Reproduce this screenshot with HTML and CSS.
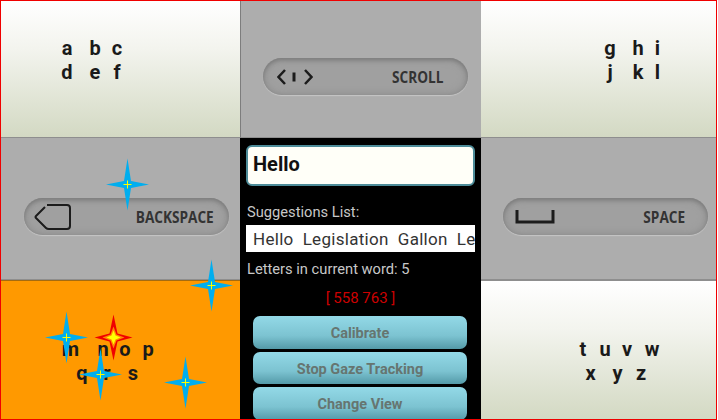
FILE: index.html
```html
<!DOCTYPE html>
<html lang="en">
<head>
    <meta charset="UTF-8">
    <title>Gaze Keyboard</title>
    <link rel="stylesheet" href="styles.css">
</head>
<body>
  <div class="screen">
    <div class="key letter-key letters-abc">
      <div class="letters">
        <div class="letter-row"><span>a</span><span>b</span><span>c</span></div>
        <div class="letter-row"><span>d</span><span>e</span><span>f</span></div>
      </div>
    </div>

    <div class="key tool-key tool-scroll">
      <div class="pill">
        <svg class="pill-icon" width="36" height="18" viewBox="0 0 36 18">
          <path d="M8 2 L1.5 9 L8 16 M28 2 L34.5 9 L28 16" />
          <path class="scroll-bar" d="M17 4.500 V13.500" />
        </svg>
        <span class="pill-label">SCROLL</span>
      </div>
    </div>

    <div class="key letter-key letters-ghi">
      <div class="letters">
        <div class="letter-row"><span>g</span><span>h</span><span>i</span></div>
        <div class="letter-row"><span>j</span><span>k</span><span>l</span></div>
      </div>
    </div>

    <div class="key tool-key tool-backspace">
      <div class="pill">
        <svg class="pill-icon" width="38" height="28" viewBox="0 0 38 28">
          <path d="M13 2 H33 Q36 2 36 5 V23 Q36 26 33 26 H15 Q13 26 12 25 L2 15 Q1 14 2 13 L11 4" />
        </svg>
        <span class="pill-label">BACKSPACE</span>
      </div>
    </div>

    <div class="panel">
      <div class="word-box">Hello</div>
      <div class="panel-text">Suggestions List:</div>
      <div class="suggestions">Hello  Legislation  Gallon  Le</div>
      <div class="panel-text letters-count">Letters in current word: 5</div>
      <div class="coords">[ 558 763 ]</div>
      <div class="btn">Calibrate</div>
      <div class="btn">Stop Gaze Tracking</div>
      <div class="btn">Change View</div>
    </div>

    <div class="key tool-key tool-space">
      <div class="pill">
        <svg class="pill-icon" width="40" height="16" viewBox="0 0 40 16">
          <path d="M2 1 V13 H38 V1" />
        </svg>
        <span class="pill-label">SPACE</span>
      </div>
    </div>

    <div class="key letters-mnop">
      <div class="letters">
        <div class="letter-row"><span>m</span><span>n</span><span>o</span><span>p</span></div>
        <div class="letter-row"><span>q</span><span>r</span><span>s</span></div>
      </div>
    </div>

    <div class="key letter-key letters-tuvw">
      <div class="letters">
        <div class="letter-row"><span>t</span><span>u</span><span>v</span><span>w</span></div>
        <div class="letter-row"><span>x</span><span>y</span><span>z</span></div>
      </div>
    </div>

    <!-- gaze points, drawn over the keys -->
    <svg class="star star-1" width="44" height="54" viewBox="-22.5 -27.5 44 54"><use href="#gaze-star" /></svg>
    <svg class="star star-2" width="44" height="54" viewBox="-22.5 -27.5 44 54"><use href="#gaze-star" /></svg>
    <svg class="star star-3" width="44" height="54" viewBox="-22.5 -27.5 44 54"><use href="#gaze-star" /></svg>
    <svg class="star star-4" width="44" height="54" viewBox="-22.5 -27.5 44 54"><use href="#gaze-star" /></svg>
    <svg class="star star-5" width="44" height="54" viewBox="-22.5 -27.5 44 54"><use href="#gaze-star" /></svg>
    <svg class="star star-now" width="44" height="54" viewBox="-22.5 -27.5 44 54">
      <polygon class="star-red" points="0,-23 4,-4 19,0 4,4 0,23 -4,4 -19,0 -4,-4" />
      <polygon class="star-glow" points="0,-11 3,-3 11,0 3,3 0,11 -3,3 -11,0 -3,-3" />
      <polygon class="star-mid" points="0,-7 2,-2 7,0 2,2 0,7 -2,2 -7,0 -2,-2" />
    </svg>
  </div>

  <svg width="0" height="0" class="defs">
    <defs>
      <g id="gaze-star">
        <polygon class="star-blue" points="0,-26 3.500,-3.500 21.500,0 3.500,3.500 0,26 -3.500,3.500 -21.500,0 -3.500,-3.500" />
        <path class="star-cross" d="M0 -4 V4 M-4 0 H4" />
      </g>
    </defs>
  </svg>
</body>
</html>
```
FILE: styles.css
```css
* {
    box-sizing: border-box;
    margin: 0;
    padding: 0;
}

body {
    width: 718px;
    height: 420px;
    overflow: hidden;
    background: white;
    font-family: Roboto, 'Liberation Sans', sans-serif;
}

.screen {
    position: relative;
    width: 717px;
    height: 420px;
    border: 1px solid #f00000;
    overflow: hidden;
    display: grid;
    grid-template-columns: 239px 241px 235px;
    grid-template-rows: 137px 142px 139px;
}

.key {
    display: flex;
}

.letter-key {
    background: linear-gradient(#ffffff, #f3f4ee 35%, #d3d9c3);
    border-bottom: 1px solid #8e8e8e;
}

.letters-tuvw {
    border-bottom: none;
    border-top: 1px solid #8e8e8e;
}

.letters {
    font-size: 20px;
    font-weight: 700;
    line-height: 24px;
    color: #1a1a1a;
}

.letter-row {
    display: grid;
    text-align: center;
}

/* the letters of the original are not on a regular grid */
.letters-abc .letters {
    margin: 35px 0 0 52px;
}

.letters-abc .letter-row {
    grid-template-columns: 28px 28px 16px;
}

.letters-ghi .letters {
    margin: 35px 0 0 115px;
}

.letters-ghi .letter-row {
    grid-template-columns: 28px 28px 11px;
}

.letters-mnop {
    background: #ff9900;
    border-top: 1px solid #a56b10;
}

.letters-mnop .letters {
    margin: 56px 0 0 53px;
}

.letters-mnop .letter-row:first-child {
    grid-template-columns: 33px 32px 12px 34px;
}

.letters-mnop .letter-row:last-child {
    grid-template-columns: 26px 24px 28px;
    margin-left: 15px;
}

.letters-tuvw .letters {
    margin: 56px 0 0 91px;
}

.letters-tuvw .letter-row:first-child {
    grid-template-columns: 22px 22px 22px 28px;
}

.letters-tuvw .letter-row:last-child {
    grid-template-columns: 27px 27px 20px;
    margin-left: 5px;
}

.tool-key {
    background: #adadad;
    border-bottom: 1px solid #8e8e8e;
    padding-left: 23px;
    padding-top: 60px;
}

.tool-scroll {
    border-left: 1px solid #7d7d7d;
    padding-top: 57px;
    padding-left: 22px;
}

.tool-space {
    padding-left: 22px;
}

.pill {
    width: 205px;
    height: 37px;
    border-radius: 19px;
    background: #a0a0a0;
    box-shadow: inset 0 2px 4px #7a7a7a, inset 0 0 10px #8e8e8e, 0 1px 1px #c6c6c6;
    display: flex;
    align-items: center;
    justify-content: space-between;
    padding: 0 25px 0 14px;
}

.tool-backspace .pill {
    padding: 0 15px 0 10px;
}

.tool-space .pill {
    padding: 0 23px 0 12px;
}

.pill-icon {
    fill: none;
    stroke: #1c1c1c;
    stroke-width: 2;
}

.tool-scroll .pill-icon {
    stroke-width: 2.5;
}

.tool-scroll .scroll-bar {
    stroke-width: 3;
}

.tool-space .pill-icon {
    stroke-width: 3;
}

.pill-label {
    font-family: 'Open Sans', sans-serif;
    font-size: 16px;
    font-weight: 700;
    color: #333333;
    transform: scaleX(0.85);
    transform-origin: right center;
}

.panel {
    grid-column: 2;
    grid-row: 2 / 4;
    background: black;
    padding: 7px 6px 0 6px;
    overflow: hidden;
    display: flex;
    flex-direction: column;
}

.word-box {
    height: 41px;
    flex-shrink: 0;
    background: #fffff8;
    border: 2px solid #4d8c99;
    border-radius: 6px;
    padding-left: 5px;
    font-size: 20px;
    font-weight: 700;
    line-height: 34px;
    color: #111;
}

.panel-text {
    font-size: 14.7px;
    line-height: 18px;
    color: #c8c8c8;
    margin-top: 17px;
    padding-left: 1px;
}

.suggestions {
    flex-shrink: 0;
    height: 27px;
    margin-top: 4px;
    background: white;
    padding-left: 7px;
    font-size: 17px;
    line-height: 28px;
    letter-spacing: 0.3px;
    white-space: pre;
    overflow: hidden;
    color: #333;
}

.letters-count {
    margin-top: 8px;
}

.coords {
    text-align: center;
    font-size: 15px;
    line-height: 18px;
    color: #cc0000;
    margin-top: 11px;
    margin-bottom: 9px;
}

.btn {
    flex-shrink: 0;
    width: 214px;
    height: 32.5px;
    margin: 0 0 3px 7px;
    border-radius: 7px;
    background: linear-gradient(#93d9e7, #7cc3d1 60%, #549aa8);
    text-align: center;
    font-size: 14.5px;
    font-weight: 700;
    line-height: 35px;
    color: #667570;
}

.defs {
    position: absolute;
}

.star {
    position: absolute;
}

.star-blue {
    fill: #00aeef;
}

.star-cross {
    stroke: #ffff00;
    stroke-width: 1;
    fill: none;
}

.star-red {
    fill: #f00000;
}

.star-glow {
    fill: #ff8a00;
}

.star-mid {
    fill: #ffff00;
}

.star-1 { left: 104px; top: 156px; }
.star-2 { left: 188px; top: 257px; }
.star-3 { left: 43px; top: 309px; }
.star-4 { left: 77px; top: 346px; }
.star-5 { left: 162px; top: 354px; }
.star-now { left: 90px; top: 309px; }
```
